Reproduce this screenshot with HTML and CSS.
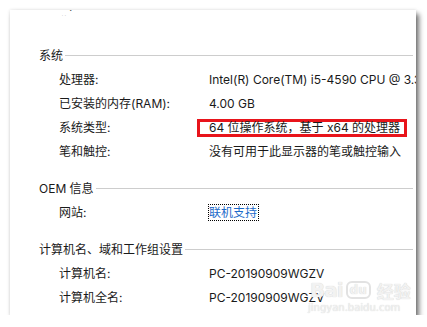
FILE: index.html
```html
<!DOCTYPE html>
<html lang="zh">
<head>
    <meta charset="UTF-8">
    <meta name="viewport" content="width=device-width, initial-scale=1.0">
    <title>系统</title>
    <link rel="stylesheet" href="styles.css">
</head>
<body>
    <div class="panel">
        <div class="cut">‥ ˙</div>

        <div class="section first">
            <div class="heading"><span>系统</span></div>
            <div class="row"><span class="label">处理器:</span><span class="value">Intel(R) Core(TM) i5-4590 CPU @ 3.30GHz</span></div>
            <div class="row"><span class="label">已安装的内存(RAM):</span><span class="value">4.00 GB</span></div>
            <div class="row"><span class="label">系统类型:</span><span class="value"><span class="mark">64 位操作系统，基于 x64 的处理器</span></span></div>
            <div class="row"><span class="label">笔和触控:</span><span class="value">没有可用于此显示器的笔或触控输入</span></div>
        </div>

        <div class="section">
            <div class="heading"><span>OEM 信息</span></div>
            <div class="row"><span class="label">网站:</span><span class="value"><a class="link" href="#">联机支持</a></span></div>
        </div>

        <div class="section">
            <div class="heading"><span>计算机名、域和工作组设置</span></div>
            <div class="row"><span class="label">计算机名:</span><span class="value">PC-20190909WGZV</span></div>
            <div class="row"><span class="label">计算机全名:</span><span class="value">PC-20190909WGZV</span></div>
        </div>

        <!-- 水印 -->
        <div class="watermark">
            <div class="wm-logo"><span class="wm-bai">Bai</span><span class="wm-du">du</span><span class="wm-jy">经验</span></div>
            <div class="wm-url">jingyan.baidu.com</div>
        </div>
    </div>
</body>
</html>
```

FILE: styles.css
```css
body {
    margin: 0;
    background-color: #ffffff;
    font-family: Inter, "Noto Sans CJK SC", sans-serif;
    font-size: 12px;
    color: #1a1a1a;
}
.panel {
    position: relative;
    margin: 10px 0 0 10px;
    width: 406px;
    height: 305px;
    background-color: #ffffff;
    overflow: hidden;
    box-shadow: 3px 4px 5px rgba(0, 0, 0, 0.55), 0 0 3px rgba(0, 0, 0, 0.12);
    padding: 0 3px 0 29px;
    box-sizing: border-box;
}
.cut {
    height: 6px;
    line-height: 6px;
    padding-left: 22px;
    color: #555;
    font-size: 10px;
    overflow: hidden;
}
.section {
    margin-top: 11px;
}
.section.first {
    margin-top: 26px;
}
.heading {
    display: flex;
    align-items: center;
    height: 24px;
    margin-bottom: 2px;
}
.heading span {
    white-space: nowrap;
}
.heading::after {
    content: "";
    flex: 1;
    height: 1px;
    background-color: #cdcdcd;
    margin: 2px 0 0 2px;
}
.row {
    display: flex;
    height: 24px;
    line-height: 24px;
    padding-left: 20px;
    white-space: nowrap;
}
.label {
    width: 150px;
    flex: none;
}
.value {
    flex: none;
}
.mark {
    display: inline-block;
    line-height: 12px;
    border: 3px solid #e8141b;
    margin-left: -12px;
    padding: 0 4px 0 9px;
}
.link {
    color: #1c6ac9;
    text-decoration: none;
    outline: 1px dotted #000;
    outline-offset: 0;
    padding: 0 1px 0 0;
}
.watermark {
    position: absolute;
    left: 300px;
    top: 268px;
    color: #f2f2f2;
    text-shadow: 0 0 1px #c8c8c8;
}
.wm-logo {
    display: flex;
    align-items: center;
    height: 24px;
}
.wm-bai {
    font-family: "DejaVu Sans", sans-serif;
    font-size: 20px;
    font-weight: bold;
    letter-spacing: -1px;
}
.wm-du {
    font-family: "DejaVu Sans", sans-serif;
    font-size: 12px;
    font-weight: bold;
    border: 2px solid #e2e2e2;
    border-radius: 6px;
    padding: 0 2px;
    margin: 0 6px 0 3px;
}
.wm-jy {
    font-size: 17px;
    font-weight: bold;
}
.wm-url {
    font-family: "DejaVu Sans", sans-serif;
    font-size: 10px;
    line-height: 12px;
    margin-left: -2px;
}
```
